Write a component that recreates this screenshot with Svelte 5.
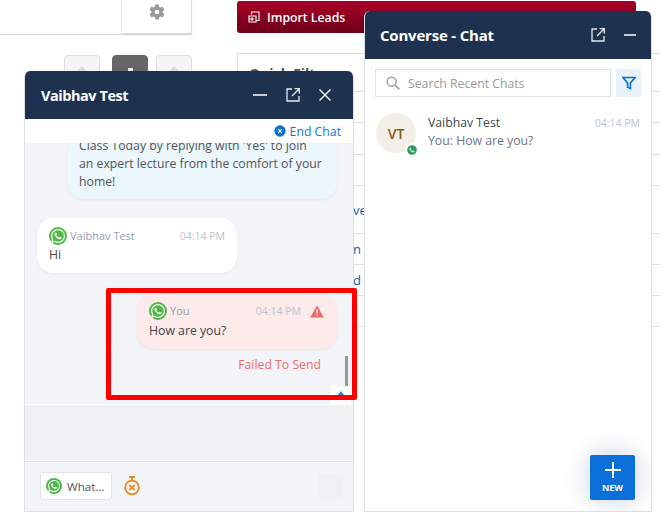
<script>
  const rows = [
    { h: 31, text: '' },
    { h: 32, text: '' },
    { h: 31, text: '' },
    { h: 48, text: 've' },
    { h: 31, text: 'n' },
    { h: 31, text: 'd' },
    { h: 31, text: '' }
  ];
  const waPath = 'M17.472 14.382c-.297-.149-1.758-.867-2.03-.967-.273-.099-.471-.148-.67.15-.197.297-.767.966-.94 1.164-.173.199-.347.223-.644.075-.297-.15-1.255-.463-2.39-1.475-.883-.788-1.48-1.761-1.653-2.059-.173-.297-.018-.458.13-.606.134-.133.298-.347.446-.52.149-.174.198-.298.298-.497.099-.198.05-.371-.025-.52-.075-.149-.669-1.612-.916-2.207-.242-.579-.487-.5-.669-.51-.173-.008-.371-.01-.57-.01-.198 0-.52.074-.792.372-.272.297-1.04 1.016-1.04 2.479 0 1.462 1.065 2.875 1.213 3.074.149.198 2.096 3.2 5.077 4.487.709.306 1.262.489 1.694.625.712.227 1.36.195 1.871.118.571-.085 1.758-.719 2.006-1.413.248-.694.248-1.289.173-1.413-.074-.124-.272-.198-.57-.347m-5.421 7.403h-.004a9.87 9.87 0 01-5.031-1.378l-.361-.214-3.741.982.998-3.648-.235-.374a9.86 9.86 0 01-1.51-5.26c.001-5.45 4.436-9.884 9.888-9.884 2.64 0 5.122 1.03 6.988 2.898a9.825 9.825 0 012.893 6.994c-.003 5.45-4.437 9.884-9.885 9.884m8.413-18.297A11.815 11.815 0 0012.05 0C5.495 0 .16 5.335.157 11.892c0 2.096.547 4.142 1.588 5.945L.057 24l6.305-1.654a11.882 11.882 0 005.683 1.448h.005c6.554 0 11.89-5.335 11.893-11.893a11.821 11.821 0 00-3.48-8.413z';
</script>

{#snippet wa(size)}
  <span class="wa" style="width:{size}px;height:{size}px">
    <svg width={size - 4} height={size - 4} viewBox="0 0 24 24" fill="#fff"><path d={waPath} /></svg>
  </span>
{/snippet}

{#snippet popout()}
  <svg width="16" height="16" viewBox="0 0 16 16" fill="none" stroke="#fff" stroke-width="1.3" opacity="0.9">
    <path d="M7 2H2v12h12V9" />
    <path d="M7 9l7-7M9.5 1.7h4.8v4.8" />
  </svg>
{/snippet}

<div class="page">
  <!-- page behind the chat windows -->
  <div class="back-left">
    <div class="topbar">
      <div class="gearbox">
        <svg width="18" height="18" viewBox="0 0 24 24" fill="#999">
          <path d="M19.4 13c.1-.3.1-.7.1-1s0-.7-.1-1l2.1-1.6c.2-.2.2-.4.1-.6l-2-3.5c-.1-.2-.4-.3-.6-.2l-2.5 1c-.5-.4-1.1-.7-1.7-1l-.4-2.6c0-.3-.2-.5-.5-.5h-4c-.3 0-.5.2-.5.4l-.4 2.7c-.6.2-1.2.6-1.7 1l-2.5-1c-.2-.1-.5 0-.6.2l-2 3.5c-.1.2-.1.5.1.6L4.6 11c-.1.3-.1.7-.1 1s0 .7.1 1l-2.1 1.6c-.2.2-.2.4-.1.6l2 3.5c.1.2.4.3.6.2l2.5-1c.5.4 1.1.7 1.7 1l.4 2.6c0 .3.2.5.5.5h4c.3 0 .5-.2.5-.4l.4-2.7c.6-.2 1.2-.6 1.7-1l2.5 1c.2.1.5 0 .6-.2l2-3.5c.1-.2.1-.5-.1-.6zM12 15a3 3 0 1 1 0-6 3 3 0 0 1 0 6z" />
        </svg>
      </div>
    </div>
    <div class="pager">
      <div class="pg first"><i></i></div>
      <div class="pg dark"><i></i></div>
      <div class="pg"><i></i></div>
    </div>
  </div>

  <div class="back-right">
    <div class="import">
      <svg width="12" height="12" viewBox="0 0 12 12" fill="none" stroke="#fff" stroke-width="1.1">
        <path d="M3.5 3.5V1h7.5v8.5H8M1 5h7v6H1zM1 8h4M3.7 6.5L5.2 8 3.7 9.5" />
      </svg>
      <span>Import Leads</span>
    </div>
    <div class="filters">
      <div class="filters-title">Quick Filters</div>
      {#each rows as r}
        <div class="frow" style="height:{r.h}px">{r.text}</div>
      {/each}
    </div>
  </div>

  <!-- conversation window -->
  <section class="win conv">
    <header class="head">
      <h2>Vaibhav Test</h2>
      <div class="head-icons wide">
        <svg width="14" height="14" viewBox="0 0 14 14" stroke="#fff" stroke-width="1.4"><path d="M0 7h14" /></svg>
        {@render popout()}
        <svg width="14" height="14" viewBox="0 0 14 14" stroke="#fff" stroke-width="1.4"><path d="M1.5 1.5l11 11M12.5 1.5l-11 11" /></svg>
      </div>
    </header>
    <div class="endbar">
      <svg width="12" height="12" viewBox="0 0 12 12">
        <circle cx="6" cy="6" r="5.7" fill="#0b72d6" />
        <path d="M4.2 4.2l3.6 3.6M7.8 4.2L4.2 7.8" stroke="#fff" stroke-width="1.2" />
      </svg>
      <span>End Chat</span>
    </div>
    <div class="msgs">
      <div class="bubble info">
        Class Today by replying with 'Yes' to join<br />an expert lecture from the comfort of your<br />home!
      </div>
      <div class="bubble in">
        <div class="meta">
          {@render wa(18)}
          <span class="who">Vaibhav Test</span>
          <span class="time">04:14 PM</span>
        </div>
        <div class="body">Hi</div>
      </div>
      <div class="bubble out">
        <div class="meta">
          {@render wa(18)}
          <span class="who">You</span>
          <span class="time">04:14 PM</span>
          <svg class="warn" width="14" height="13" viewBox="0 0 14 13">
            <path d="M7 0.5L13.8 12.5H0.2z" fill="#ee6a6a" />
            <path d="M7 4.5v4M7 9.6v1.5" stroke="#fff" stroke-width="1.3" />
          </svg>
        </div>
        <div class="body">How are you?</div>
      </div>
      <div class="failed">Failed To Send</div>
      <div class="scrollthumb"></div>
      <div class="scrolldown"><i></i></div>
    </div>
    <div class="composer"></div>
    <footer class="foot">
      <div class="chip">
        {@render wa(16)}
        <span>What...</span>
      </div>
      <svg class="timer" width="16" height="20" viewBox="0 0 16 20" fill="none" stroke="#e8891c" stroke-width="1.8">
        <circle cx="8" cy="11.5" r="6.8" />
        <path d="M5 1h6M8 1v3.5M5.3 8.8l5.4 5.4M10.7 8.8l-5.4 5.4" />
      </svg>
      <div class="send"></div>
    </footer>
  </section>

  <!-- chat list window -->
  <section class="win list">
    <header class="head">
      <h2>Converse - Chat</h2>
      <div class="head-icons">
        {@render popout()}
        <svg width="12" height="14" viewBox="0 0 12 14" stroke="#fff" stroke-width="1.4"><path d="M0 7h12" /></svg>
      </div>
    </header>
    <div class="searchrow">
      <div class="search">
        <svg width="14" height="14" viewBox="0 0 14 14" fill="none" stroke="#8c939b" stroke-width="1.3">
          <circle cx="5.7" cy="5.7" r="4.5" />
          <path d="M9 9l4.3 4.3" />
        </svg>
        <span>Search Recent Chats</span>
      </div>
      <div class="filterbtn">
        <svg width="14" height="14" viewBox="0 0 14 14" fill="none" stroke="#0b72d6" stroke-width="1.7">
          <path d="M1 1.5h12L8.4 7v5.5l-2.8-1.2V7z" />
        </svg>
      </div>
    </div>
    <div class="item">
      <div class="avatar">
        VT
        <span class="badge">
          <svg width="10" height="10" viewBox="0 0 24 24">
            <circle cx="12" cy="12" r="11.5" fill="#2a9d5c" />
            <path d="M17.5 14.4c-.3-.1-1.8-.9-2-1-.3-.1-.5-.1-.7.2-.2.3-.8 1-.9 1.2-.2.2-.3.2-.6.1-.3-.2-1.3-.5-2.4-1.5-.9-.8-1.5-1.8-1.7-2.1-.2-.3 0-.5.1-.6l.5-.5c.1-.2.2-.3.3-.5.1-.2 0-.4 0-.5l-.9-2.2c-.2-.6-.5-.5-.7-.5h-.6c-.2 0-.5.1-.8.4-.3.3-1 1-1 2.5s1.1 2.9 1.2 3.1c.1.2 2.1 3.2 5.1 4.5 2.5 1.1 3 .9 3.6.8.6-.1 1.8-.7 2-1.4.2-.7.2-1.3.2-1.4-.1-.1-.3-.2-.7-.4z" fill="#fff" />
          </svg>
        </span>
      </div>
      <div class="item-text">
        <div class="item-top">
          <span class="item-name">Vaibhav Test</span>
          <span class="time">04:14 PM</span>
        </div>
        <div class="item-last">You: How are you?</div>
      </div>
    </div>
    <button class="fab">
      <svg width="16" height="16" viewBox="0 0 16 16" stroke="#fff" stroke-width="2"><path d="M8 0v16M0 8h16" /></svg>
      <span>NEW</span>
    </button>
  </section>

  <!-- annotation drawn over the failed message -->
  <div class="callout"></div>
</div>

<style>
  :global(body) {
    margin: 0;
    background: #fff;
  }

  .page {
    position: relative;
    width: 660px;
    height: 512px;
    overflow: hidden;
    display: flex;
    gap: 45px;
    font-family: "Open Sans", "Liberation Sans", sans-serif;
    font-size: 12.25px;
    color: #444;
  }

  .back-left {
    width: 192px;
    flex: none;
  }

  .topbar {
    height: 34px;
    border-bottom: 1px solid #ddd;
    display: flex;
    justify-content: flex-end;
  }

  .gearbox {
    width: 71px;
    height: 34px;
    background: #fff;
    border-right: 1px solid #ddd;
    border-left: 1px solid #eee;
    border-bottom: 1px solid #ddd;
    box-shadow: 0 1px 2px rgba(0, 0, 0, 0.08);
    display: flex;
    justify-content: center;
    padding-top: 3px;
    box-sizing: border-box;
  }

  .pager {
    display: flex;
    justify-content: flex-end;
    gap: 8px;
    margin-top: 20px;
  }

  .pg {
    width: 36px;
    height: 40px;
    box-sizing: border-box;
    background: #f5f5f5;
    border: 1px solid #ddd;
    border-radius: 4px;
    display: flex;
    justify-content: center;
    padding-top: 12px;
  }

  .pg.first {
    margin-right: 4px;
  }

  .pg i {
    width: 8px;
    height: 8px;
    background: #ddd;
    transform: rotate(45deg);
  }

  .pg.dark {
    background: #666;
    border-color: #666;
  }

  .pg.dark i {
    width: 5px;
    height: 5px;
    background: #eee;
    transform: none;
  }

  .back-right {
    width: 399px;
    flex: none;
    padding-top: 1px;
  }

  .import {
    height: 32px;
    box-sizing: border-box;
    padding-left: 11px;
    display: flex;
    align-items: center;
    gap: 7px;
    border-radius: 3px;
    background: linear-gradient(#a90029, #6d0017);
    color: #fff;
    font-weight: 600;
  }

  .filters {
    margin-top: 20px;
    border: 1px solid #ddd;
    border-bottom: 0;
    width: 500px;
  }

  .filters-title {
    height: 38px;
    box-sizing: border-box;
    padding: 10px 11px;
    font-size: 14px;
    font-weight: 700;
    color: #555;
    border-bottom: 1px solid #ddd;
  }

  .frow {
    box-sizing: border-box;
    padding-left: 115px;
    border-bottom: 1px solid #ddd;
    color: #0b5fa5;
    font-size: 13px;
    line-height: 20px;
    display: flex;
    align-items: center;
  }

  .win {
    position: absolute;
    background: #fff;
    border: 1px solid #dcdfe4;
    border-top: 0;
    border-radius: 6px 6px 0 0;
    box-sizing: border-box;
    display: flex;
    flex-direction: column;
    overflow: hidden;
  }

  .conv {
    left: 24px;
    top: 71px;
    width: 330px;
    height: 441px;
    background: #f3f4f7;
  }

  .list {
    left: 364px;
    top: 11px;
    width: 288px;
    height: 501px;
  }

  .head {
    height: 48px;
    flex: none;
    background: #1e3250;
    color: #fff;
    display: flex;
    align-items: center;
    justify-content: space-between;
    padding: 0 15px;
  }

  .head h2 {
    margin: 0;
    font-size: 15px;
    font-weight: 700;
    letter-spacing: -0.2px;
  }

  .conv .head h2 {
    font-size: 14.5px;
    letter-spacing: -0.45px;
    margin-left: 1px;
  }

  .head-icons {
    display: flex;
    align-items: center;
    gap: 18px;
  }

  .head-icons.wide {
    gap: 17px;
    margin-right: 6px;
  }

  .head-icons.wide svg:first-child {
    margin-right: 1px;
  }

  .endbar {
    height: 24px;
    flex: none;
    background: #fff;
    color: #1478d4;
    display: flex;
    align-items: center;
    justify-content: flex-end;
    gap: 4px;
    padding-right: 12px;
    box-sizing: border-box;
  }

  .msgs {
    position: relative;
    height: 262px;
    flex: none;
    overflow: hidden;
    display: flex;
    flex-direction: column;
    justify-content: flex-end;
    padding: 0 16px 30px 12px;
    box-sizing: border-box;
    border-bottom: 1px solid #fff;
  }

  .bubble {
    box-sizing: border-box;
    flex: none;
    line-height: 18px;
    border-radius: 16px;
    box-shadow: 0 1px 3px rgba(0, 0, 0, 0.06);
  }

  .info {
    width: 270px;
    margin-left: 30px;
    padding: 0 12px 8px;
    background: #ebf6fd;
    color: #555;
    white-space: nowrap;
  }

  .in {
    width: 200px;
    height: 55px;
    margin-top: 19px;
    padding: 9px 12px;
    background: #fff;
  }

  .out {
    width: 200px;
    height: 55px;
    margin-top: 21px;
    margin-left: 100px;
    padding: 8px 13px 8px 12px;
    background: #fdeaea;
  }

  .meta {
    display: flex;
    align-items: center;
    height: 18px;
    gap: 3px;
  }

  .who {
    color: #97a0ae;
    font-size: 11px;
  }

  .time {
    margin-left: auto;
    color: #bcc3cd;
    font-size: 10.5px;
  }

  .warn {
    margin-left: 6px;
  }

  .body {
    color: #444;
    margin-top: 1px;
  }

  .out .body {
    margin-top: 2px;
  }

  .wa {
    flex: none;
    display: inline-flex;
    align-items: center;
    justify-content: center;
    border-radius: 50%;
    background: #4fb948;
  }

  .failed {
    flex: none;
    margin-top: 7px;
    margin-right: 16px;
    text-align: right;
    color: #f26a6a;
    line-height: 18px;
  }

  .scrollthumb {
    position: absolute;
    right: 5px;
    bottom: 18px;
    width: 3px;
    height: 30px;
    background: #999;
  }

  .scrolldown {
    position: absolute;
    right: 2px;
    bottom: 0;
    width: 20px;
    height: 18px;
    background: #fff;
    display: flex;
    justify-content: center;
    padding-top: 5px;
    box-sizing: border-box;
  }

  .scrolldown i {
    width: 0;
    height: 0;
    border-left: 3px solid transparent;
    border-right: 3px solid transparent;
    border-bottom: 4px solid #2f80d6;
  }

  .composer {
    height: 55px;
    flex: none;
    background: #f0f1f3;
    border-bottom: 1px solid #fff;
    box-shadow: 0 1px 1px rgba(0, 0, 0, 0.06);
  }

  .foot {
    flex: 1;
    display: flex;
    align-items: center;
    padding: 0 10px 0 15px;
  }

  .chip {
    width: 72px;
    height: 28px;
    box-sizing: border-box;
    background: #fff;
    border: 1px solid #e1e4e9;
    border-radius: 2px;
    display: flex;
    align-items: center;
    gap: 5px;
    padding-left: 5px;
    font-size: 11.6px;
    color: #555;
  }

  .timer {
    margin-left: 12px;
  }

  .send {
    width: 25px;
    height: 25px;
    margin-left: auto;
    background: #f0f1f3;
  }

  .searchrow {
    display: flex;
    gap: 5px;
    padding: 10px 10px 0;
  }

  .search {
    width: 236px;
    height: 28px;
    box-sizing: border-box;
    border: 1px solid #dfe2e6;
    display: flex;
    align-items: center;
    gap: 8px;
    padding-left: 10px;
    color: #9a9a9a;
  }

  .filterbtn {
    width: 25px;
    height: 28px;
    background: #e9f2fb;
    border-radius: 2px;
    display: flex;
    align-items: center;
    justify-content: center;
  }

  .item {
    display: flex;
    gap: 12px;
    padding: 16px 11px 0;
  }

  .avatar {
    position: relative;
    width: 40px;
    height: 40px;
    flex: none;
    border-radius: 50%;
    background: #f3efe6;
    color: #8a5a14;
    font-size: 14px;
    font-weight: 600;
    display: flex;
    align-items: center;
    justify-content: center;
  }

  .badge {
    position: absolute;
    right: -3px;
    bottom: -4px;
    width: 14px;
    height: 14px;
    border-radius: 50%;
    background: #fff;
    display: flex;
    align-items: center;
    justify-content: center;
  }

  .item-text {
    flex: 1;
    line-height: 18px;
    margin-top: 1px;
  }

  .item-top {
    display: flex;
    align-items: center;
  }

  .item-name {
    color: #444;
  }

  .item-last {
    color: #6a7686;
  }

  .fab {
    position: absolute;
    right: 16px;
    bottom: 11px;
    width: 45px;
    height: 45px;
    padding: 0;
    border: 0;
    border-radius: 2px;
    background: #0a6fd8;
    color: #fff;
    font-family: inherit;
    font-size: 9px;
    font-weight: 700;
    display: flex;
    flex-direction: column;
    align-items: center;
    justify-content: center;
    gap: 3px;
    box-shadow: 0 0 24px rgba(30, 70, 130, 0.25);
  }

  .callout {
    position: absolute;
    left: 106px;
    top: 288px;
    width: 251px;
    height: 112px;
    box-sizing: border-box;
    border: 5px solid #f00;
    border-radius: 2px;
  }
</style>
